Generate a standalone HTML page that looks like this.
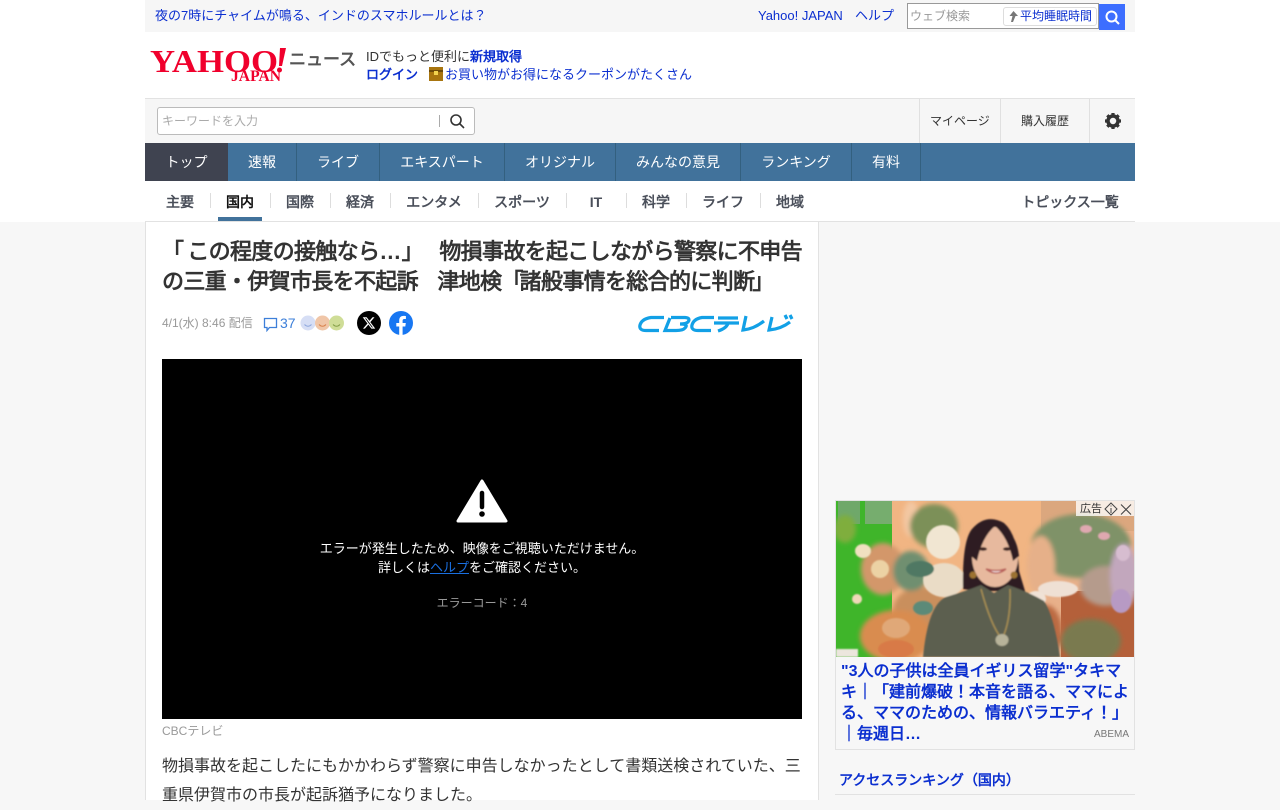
<!DOCTYPE html>
<html lang="ja"><head><meta charset="utf-8"><title>Yahoo!ニュース</title>
<style>
*{box-sizing:border-box}
html,body{margin:0;padding:0;width:1280px;height:800px;overflow:hidden;background:#f7f7f7;font-family:"Liberation Sans","WenQuanYi Zen Hei",sans-serif;color:#333}
.a{position:absolute;white-space:nowrap}
.l{color:#0b2fd0}
.nav span{position:absolute;top:143px;height:38px;line-height:39px;color:#fff;font-size:14px;text-align:center;border-right:1px solid #33607f}
.sub span{position:absolute;top:194px;height:17px;line-height:17px;font-size:14px;font-weight:bold;color:#4a4f5a;text-align:center}
.sub i{position:absolute;top:193px;height:15px;width:1px;background:#ddd}
.w{display:inline-block;width:21.33px;text-align:center;letter-spacing:0}
</style></head><body>
<div class="a" style="left:0;top:0;width:1280px;height:222px;background:#fff"></div>
<div class="a" style="left:145px;top:0;width:990px;height:32px;background:#f6f6f6"></div>
<div class="a l" style="left:155px;top:8px;font-size:13px;line-height:16px">夜の7時にチャイムが鳴る、インドのスマホルールとは？</div>
<div class="a l" style="left:758px;top:8px;font-size:13px;line-height:16px">Yahoo! JAPAN</div>
<div class="a l" style="left:855px;top:8px;font-size:13px;line-height:16px">ヘルプ</div>
<div class="a" style="left:907px;top:3px;width:192px;height:26px;border:1px solid #999;background:#fff"></div>
<div class="a" style="left:910px;top:9px;font-size:12px;line-height:15px;color:#999">ウェブ検索</div>
<div class="a" style="left:1003px;top:7px;width:94px;height:19px;border:1px solid #ddd;border-radius:3px;background:#fff"></div>
<svg class="a" style="left:1007px;top:10px" width="12" height="13"><path d="M6.500 1L11 6H8.500L6 12H4L5.500 6H2.500Z" fill="#777"/></svg>
<div class="a l" style="left:1020px;top:9px;font-size:12px;line-height:15px">平均睡眠時間</div>
<div class="a" style="left:1099px;top:4px;width:26px;height:26px;background:#3d6eff"></div>
<svg class="a" style="left:1104px;top:9px" width="17" height="17" fill="none" stroke="#fff" stroke-width="2"><circle cx="7.500" cy="7.500" r="5"/><path d="M11 11L15 15"/></svg>

<svg class="a" style="left:149px;top:45px" width="140" height="40" viewBox="0 0 140 40">
<text x="1" y="27" font-family="Liberation Serif" font-weight="bold" font-size="32" textLength="128" lengthAdjust="spacingAndGlyphs" fill="#f0002c">YAHOO</text>
<path d="M131 3L137 3L133 21L130 21Z" fill="#f0002c"/><circle cx="130.500" cy="25" r="2.500" fill="#f0002c"/>
<text x="82" y="36" font-family="Liberation Serif" font-weight="bold" font-size="16" textLength="50" lengthAdjust="spacingAndGlyphs" fill="#f0002c">JAPAN</text>
</svg>
<div class="a" style="left:289px;top:50px;font-size:17px;line-height:20px;font-weight:bold;color:#555">ニュース</div>
<div class="a" style="left:366px;top:49px;font-size:13px;line-height:16px">IDでもっと便利に<b class="l">新規取得</b></div>
<div class="a l" style="left:366px;top:67px;font-size:13px;line-height:16px;font-weight:bold">ログイン</div>
<div class="a" style="left:429px;top:67px;width:14px;height:14px;background:#a8750f"><div style="position:absolute;left:0;top:3px;width:14px;height:2px;background:#6d4a08"></div><div style="position:absolute;left:5px;top:4px;width:4px;height:4px;background:#f2d34f"></div></div>
<div class="a l" style="left:445px;top:67px;font-size:13px;line-height:16px">お買い物がお得になるクーポンがたくさん</div>

<div class="a" style="left:145px;top:98px;width:990px;height:45px;background:#f6f6f6;border-top:1px solid #e2e2e2"></div>
<div class="a" style="left:157px;top:107px;width:318px;height:28px;background:#fff;border:1px solid #bbb;border-radius:3px"></div>
<div class="a" style="left:162px;top:113px;font-size:12px;line-height:16px;color:#aaa">キーワードを入力</div>
<div class="a" style="left:439px;top:115px;width:1px;height:12px;background:#aaa"></div>
<svg class="a" style="left:449px;top:113px" width="17" height="17" fill="none" stroke="#333" stroke-width="1.600"><circle cx="7" cy="7" r="5"/><path d="M10.500 10.500L15 15"/></svg>
<div class="a" style="left:919px;top:99px;width:1px;height:44px;background:#e0e0e0"></div>
<div class="a" style="left:1000px;top:99px;width:1px;height:44px;background:#e0e0e0"></div>
<div class="a" style="left:1089px;top:99px;width:1px;height:44px;background:#e0e0e0"></div>
<div class="a" style="left:930px;top:113px;font-size:12px;line-height:16px">マイページ</div>
<div class="a" style="left:1021px;top:113px;font-size:12px;line-height:16px">購入履歴</div>
<svg class="a" style="left:1104px;top:112px" width="18" height="18" viewBox="0 0 18 18"><circle cx="9" cy="9" r="5" fill="none" stroke="#333" stroke-width="3.500"/><g stroke="#333" stroke-width="3.200"><path d="M9 1V4M9 14V17M1 9H4M14 9H17M3.300 3.300L5.400 5.400M12.600 12.600L14.700 14.700M3.300 14.700L5.400 12.600M12.600 5.400L14.700 3.300"/></g></svg>

<div class="a" style="left:145px;top:143px;width:990px;height:38px;background:#41729b"></div>
<div class="nav">
<span style="left:145px;width:83px;background:#3f4350;border:0">トップ</span>
<span style="left:228px;width:69px">速報</span>
<span style="left:297px;width:83px">ライブ</span>
<span style="left:380px;width:125px">エキスパート</span>
<span style="left:505px;width:111px">オリジナル</span>
<span style="left:616px;width:125px">みんなの意見</span>
<span style="left:741px;width:111px">ランキング</span>
<span style="left:852px;width:69px">有料</span>
</div>
<div class="sub">
<span style="left:150px;width:60px">主要</span><i style="left:210px"></i>
<span style="left:210px;width:60px;color:#111">国内</span><i style="left:270px"></i>
<span style="left:270px;width:60px">国際</span><i style="left:330px"></i>
<span style="left:330px;width:60px">経済</span><i style="left:390px"></i>
<span style="left:390px;width:88px">エンタメ</span><i style="left:478px"></i>
<span style="left:478px;width:88px">スポーツ</span><i style="left:566px"></i>
<span style="left:566px;width:60px">IT</span><i style="left:626px"></i>
<span style="left:626px;width:60px">科学</span><i style="left:686px"></i>
<span style="left:686px;width:74px">ライフ</span><i style="left:760px"></i>
<span style="left:760px;width:60px">地域</span>
<span style="left:1021px;width:98px;white-space:nowrap">トピックス一覧</span>
</div>
<div class="a" style="left:218px;top:217px;width:44px;height:4px;background:#41729b"></div>
<div class="a" style="left:145px;top:221px;width:990px;height:1px;background:#e2e2e2"></div>

<div class="a" style="left:145px;top:222px;width:674px;height:578px;background:#fff;border-left:1px solid #e2e2e2;border-right:1px solid #e2e2e2"></div>
<div class="a" style="left:162px;top:237px;font-size:22px;line-height:30px;font-weight:bold;color:#333;letter-spacing:-.67px"><span style="margin-right:4px">「</span>この程度の接触なら<span class="w" style="margin-right:1px">…</span><span style="margin-right:6px">」</span>　物損事故を起こしながら警察に不申告<br>の三重<span class="w">・</span>伊賀市長を不起訴<span style="margin-right:-2px">　</span>津地検<span style="margin-right:-3px">「</span>諸般事情を総合的に判<span style="margin-right:-2px">断</span>」</div>
<div class="a" style="left:162px;top:315px;font-size:12px;line-height:16px;color:#999">4/1(水) 8:46 配信</div>
<svg class="a" style="left:263px;top:317px" width="15" height="15" fill="none" stroke="#3d7fd9" stroke-width="1.300"><path d="M1.500 1.500H13.500V10.500H6.500L4 13.500V10.500H1.500Z"/></svg>
<div class="a" style="left:280px;top:315px;font-size:14px;line-height:16px;color:#3d7fd9">37</div>
<svg class="a" style="left:300px;top:315px" width="46" height="16">
<circle cx="8" cy="8" r="7.500" fill="#d6def5"/><circle cx="22.500" cy="8" r="7.500" fill="#f0c6a8"/><circle cx="36.500" cy="8" r="7.500" fill="#cfdd97"/>
<g fill="none" stroke="#8fa8dd" stroke-width="1"><path d="M4.500 9.500Q8 13 11.500 9.500"/></g><g fill="none" stroke="#d9824c" stroke-width="1"><path d="M19 9.500Q22.500 13 26 9.500"/></g><g fill="none" stroke="#86a04a" stroke-width="1"><path d="M33 9.500Q36.500 13 40 9.500"/></g></svg>
<svg class="a" style="left:357px;top:311px" width="24" height="24"><circle cx="12" cy="12" r="12" fill="#000"/><g transform="translate(5 5) scale(.58)"><path d="M18.244 2.250h3.308l-7.227 8.260 8.502 11.240H16.170l-5.214-6.817L4.990 21.750H1.680l7.730-8.835L1.254 2.250H8.080l4.713 6.231zm-1.161 17.520h1.833L7.084 4.126H5.117z" fill="#fff"/></g></svg>
<svg class="a" style="left:389px;top:311px" width="24" height="24"><circle cx="12" cy="12" r="12" fill="#1877f2"/><path d="M10.200 24V15.500H7.300V12H10.200V9.400C10.200 6.500 12 4.900 14.600 4.900C15.900 4.900 16.900 5.100 16.900 5.100V8H15.400C14 8 13.600 8.900 13.600 9.700V12H16.800L16.300 15.500H13.600V24Z" fill="#fff"/></svg>
<svg class="a" style="left:638px;top:314px" width="158" height="20" fill="none" stroke="#12a0e6" stroke-width="3.200">
<path d="M26 3.500H13Q3 5 1.800 12Q1.500 16.500 8 16.500H21"/><path d="M33 3.500H47Q53 4 50 8Q48 10 42 10Q51 10 47 14Q45 16.500 38 16.500H27L32 4"/><path d="M76 3.500H64Q55 5 53.800 12Q53.500 16.500 60 16.500H73"/><path d="M80 4H100M76 9H101M90 9Q89 14 80 17"/><path d="M108 2L105 16Q116 15 126 7"/><path d="M134 3L131 16Q143 15 152 8M147 1L149 5M152 1L154 5"/></svg>

<div class="a" style="left:162px;top:359px;width:640px;height:360px;background:#000"></div>
<svg class="a" style="left:456px;top:478px" width="52" height="46"><path d="M26 3L50 43H2Z" fill="#fff" stroke="#fff" stroke-width="3" stroke-linejoin="round"/><path d="M26 15V29" stroke="#000" stroke-width="4.500" stroke-linecap="round"/><circle cx="26" cy="36" r="2.800" fill="#000"/></svg>
<div class="a" style="left:162px;top:539px;width:640px;text-align:center;font-size:13px;line-height:19px;color:#fff">エラーが発生したため、映像をご視聴いただけません。<br>詳しくは<span style="color:#1a6fe0;text-decoration:underline">ヘルプ</span>をご確認ください。</div>
<div class="a" style="left:162px;top:595px;width:640px;text-align:center;font-size:12px;line-height:16px;color:#999">エラーコード：4</div>
<div class="a" style="left:162px;top:723px;font-size:12px;line-height:16px;color:#999">CBCテレビ</div>
<div class="a" style="left:162px;top:752px;width:640px;font-size:16px;line-height:29px;color:#333;white-space:normal">物損事故を起こしたにもかかわらず警察に申告しなかったとして書類送検されていた、三重県伊賀市の市長が起訴猶予になりました。</div>

<div class="a" style="left:835px;top:500px;width:300px;height:250px;border:1px solid #e2e2e2;background:#f7f7f7"></div>
<svg class="a" style="left:836px;top:501px" width="298" height="156" viewBox="0 0 298 156">
<defs><filter id="b"><feGaussianBlur stdDeviation="2.500"/></filter><filter id="c"><feGaussianBlur stdDeviation=".8"/></filter><clipPath id="k"><rect width="298" height="156"/></clipPath></defs>
<g clip-path="url(#k)">
<rect width="298" height="156" fill="#e8b08a"/>
<rect x="0" y="0" width="56" height="156" fill="#3fb52a"/>
<rect x="2" y="0" width="22" height="23" fill="#6fa86a"/><rect x="29" y="0" width="27" height="23" fill="#76ad6e"/>
<rect x="56" y="0" width="150" height="156" fill="#f1b583"/>
<rect x="205" y="0" width="93" height="30" fill="#dba77e"/>
<rect x="225" y="90" width="73" height="66" fill="#b4603a"/>
<g filter="url(#b)">
<ellipse cx="75" cy="18" rx="8" ry="18" fill="#f3c7a2"/>
<ellipse cx="98" cy="25" rx="24" ry="22" fill="#7c9059"/>
<ellipse cx="47" cy="68" rx="22" ry="26" fill="#d3976a"/>
<ellipse cx="85" cy="110" rx="28" ry="24" fill="#c98f5d"/>
<ellipse cx="60" cy="135" rx="36" ry="26" fill="#d98c50"/>
<ellipse cx="75" cy="70" rx="18" ry="20" fill="#6f8f70"/>
<ellipse cx="245" cy="45" rx="50" ry="32" fill="#7f9268"/>
<ellipse cx="270" cy="85" rx="26" ry="20" fill="#b59b8c"/>
<ellipse cx="288" cy="75" rx="14" ry="32" fill="#c2a7bd"/>
<ellipse cx="205" cy="65" rx="14" ry="30" fill="#e6b089"/>
<ellipse cx="255" cy="140" rx="30" ry="22" fill="#7a7a50"/>
<ellipse cx="210" cy="130" rx="16" ry="26" fill="#bb6a42"/>
<ellipse cx="9" cy="28" rx="11" ry="14" fill="#7fae3c"/>
</g>
<g filter="url(#c)">
<ellipse cx="107" cy="41" rx="17" ry="17" fill="#f1e6d2"/>
<ellipse cx="108" cy="79" rx="21" ry="17" fill="#eadcc6"/>
<ellipse cx="222" cy="88" rx="20" ry="8" fill="#efe0d4"/>
<ellipse cx="200" cy="98" rx="10" ry="8" fill="#f0e2d6"/>
<ellipse cx="27" cy="50" rx="8" ry="7" fill="#f0e0c0"/>
<ellipse cx="44" cy="68" rx="9" ry="9" fill="#ecd2a4"/>
<ellipse cx="84" cy="68" rx="14" ry="8" fill="#4f7863"/>
<ellipse cx="21" cy="98" rx="5" ry="5" fill="#f0d8b8"/>
<ellipse cx="60" cy="127" rx="14" ry="10" fill="#e0a878"/>
<ellipse cx="60" cy="148" rx="18" ry="9" fill="#d87a46"/>
<ellipse cx="87" cy="107" rx="10" ry="7" fill="#5c8a78"/>
<ellipse cx="287" cy="52" rx="7" ry="8" fill="#d7bdd0"/><ellipse cx="285" cy="100" rx="10" ry="12" fill="#b79ac4"/>
<ellipse cx="250" cy="28" rx="6" ry="4" fill="#dfa8b0"/><ellipse cx="268" cy="35" rx="6" ry="4" fill="#dfa8b0"/>
<path d="M127 88Q126 40 136 28Q150 12 168 22Q182 34 183 70L192 100L165 90H140Z" fill="#2e1f20"/>
<ellipse cx="159" cy="56" rx="23" ry="30" fill="#e7b99e"/>
<path d="M135 55Q138 28 159 25Q146 36 141 60ZM183 55Q180 28 159 25Q172 36 177 60Z" fill="#2e1f20"/>
<ellipse cx="147" cy="48" rx="4" ry="1.800" fill="#3a2420"/><ellipse cx="171" cy="48" rx="4" ry="1.800" fill="#3a2420"/>
<path d="M150 68Q160 76 170 68Q160 71 150 68Z" fill="#fff" stroke="#b9605a" stroke-width="1.500"/>
<circle cx="137" cy="74" r="3.500" fill="#9c7230"/><circle cx="178" cy="74" r="3.500" fill="#9c7230"/>
<path d="M87 156Q92 104 110 96Q130 90 145 84L158 92L172 84Q190 90 208 100Q218 115 224 156Z" fill="#5b5f50"/>
<path d="M145 88Q155 125 166 138Q175 120 174 88" fill="none" stroke="#a78e52" stroke-width="1.500"/>
<ellipse cx="166" cy="139" rx="6.500" ry="6" fill="#b7b39a"/>
<rect x="0" y="148" width="22" height="8" fill="#ece6dd"/>
</g>
</g></svg>
<div class="a" style="left:1076px;top:501px;width:58px;height:15px;background:rgba(255,255,255,.78)"></div>
<div class="a" style="left:1080px;top:502px;font-size:11px;line-height:14px;color:#333">広告</div>
<svg class="a" style="left:1103px;top:502px" width="30" height="14" fill="none" stroke="#444"><path d="M8 1L14 7L8 13L2 7Z"/><path d="M8 6V11M8 3.500V4.500"/><path d="M18 2.500L28 12.500M28 2.500L18 12.500" stroke-width="1.100"/></svg>
<div class="a l" style="left:841px;top:661px;font-size:16px;line-height:21px;font-weight:bold">"3人の子供は全員イギリス留学"タキマ<br>キ｜「建前爆破！本音を語る、ママによ<br>る、ママのための、情報バラエティ！」<br>｜毎週日…</div>
<div class="a" style="left:1094px;top:728px;font-size:10px;line-height:13px;color:#777">ABEMA</div>
<div class="a l" style="left:839px;top:772px;font-size:14px;line-height:17px;font-weight:bold">アクセスランキング（国内）</div>
<div class="a" style="left:835px;top:794px;width:300px;height:1px;background:#e2e2e2"></div>
</body></html>
